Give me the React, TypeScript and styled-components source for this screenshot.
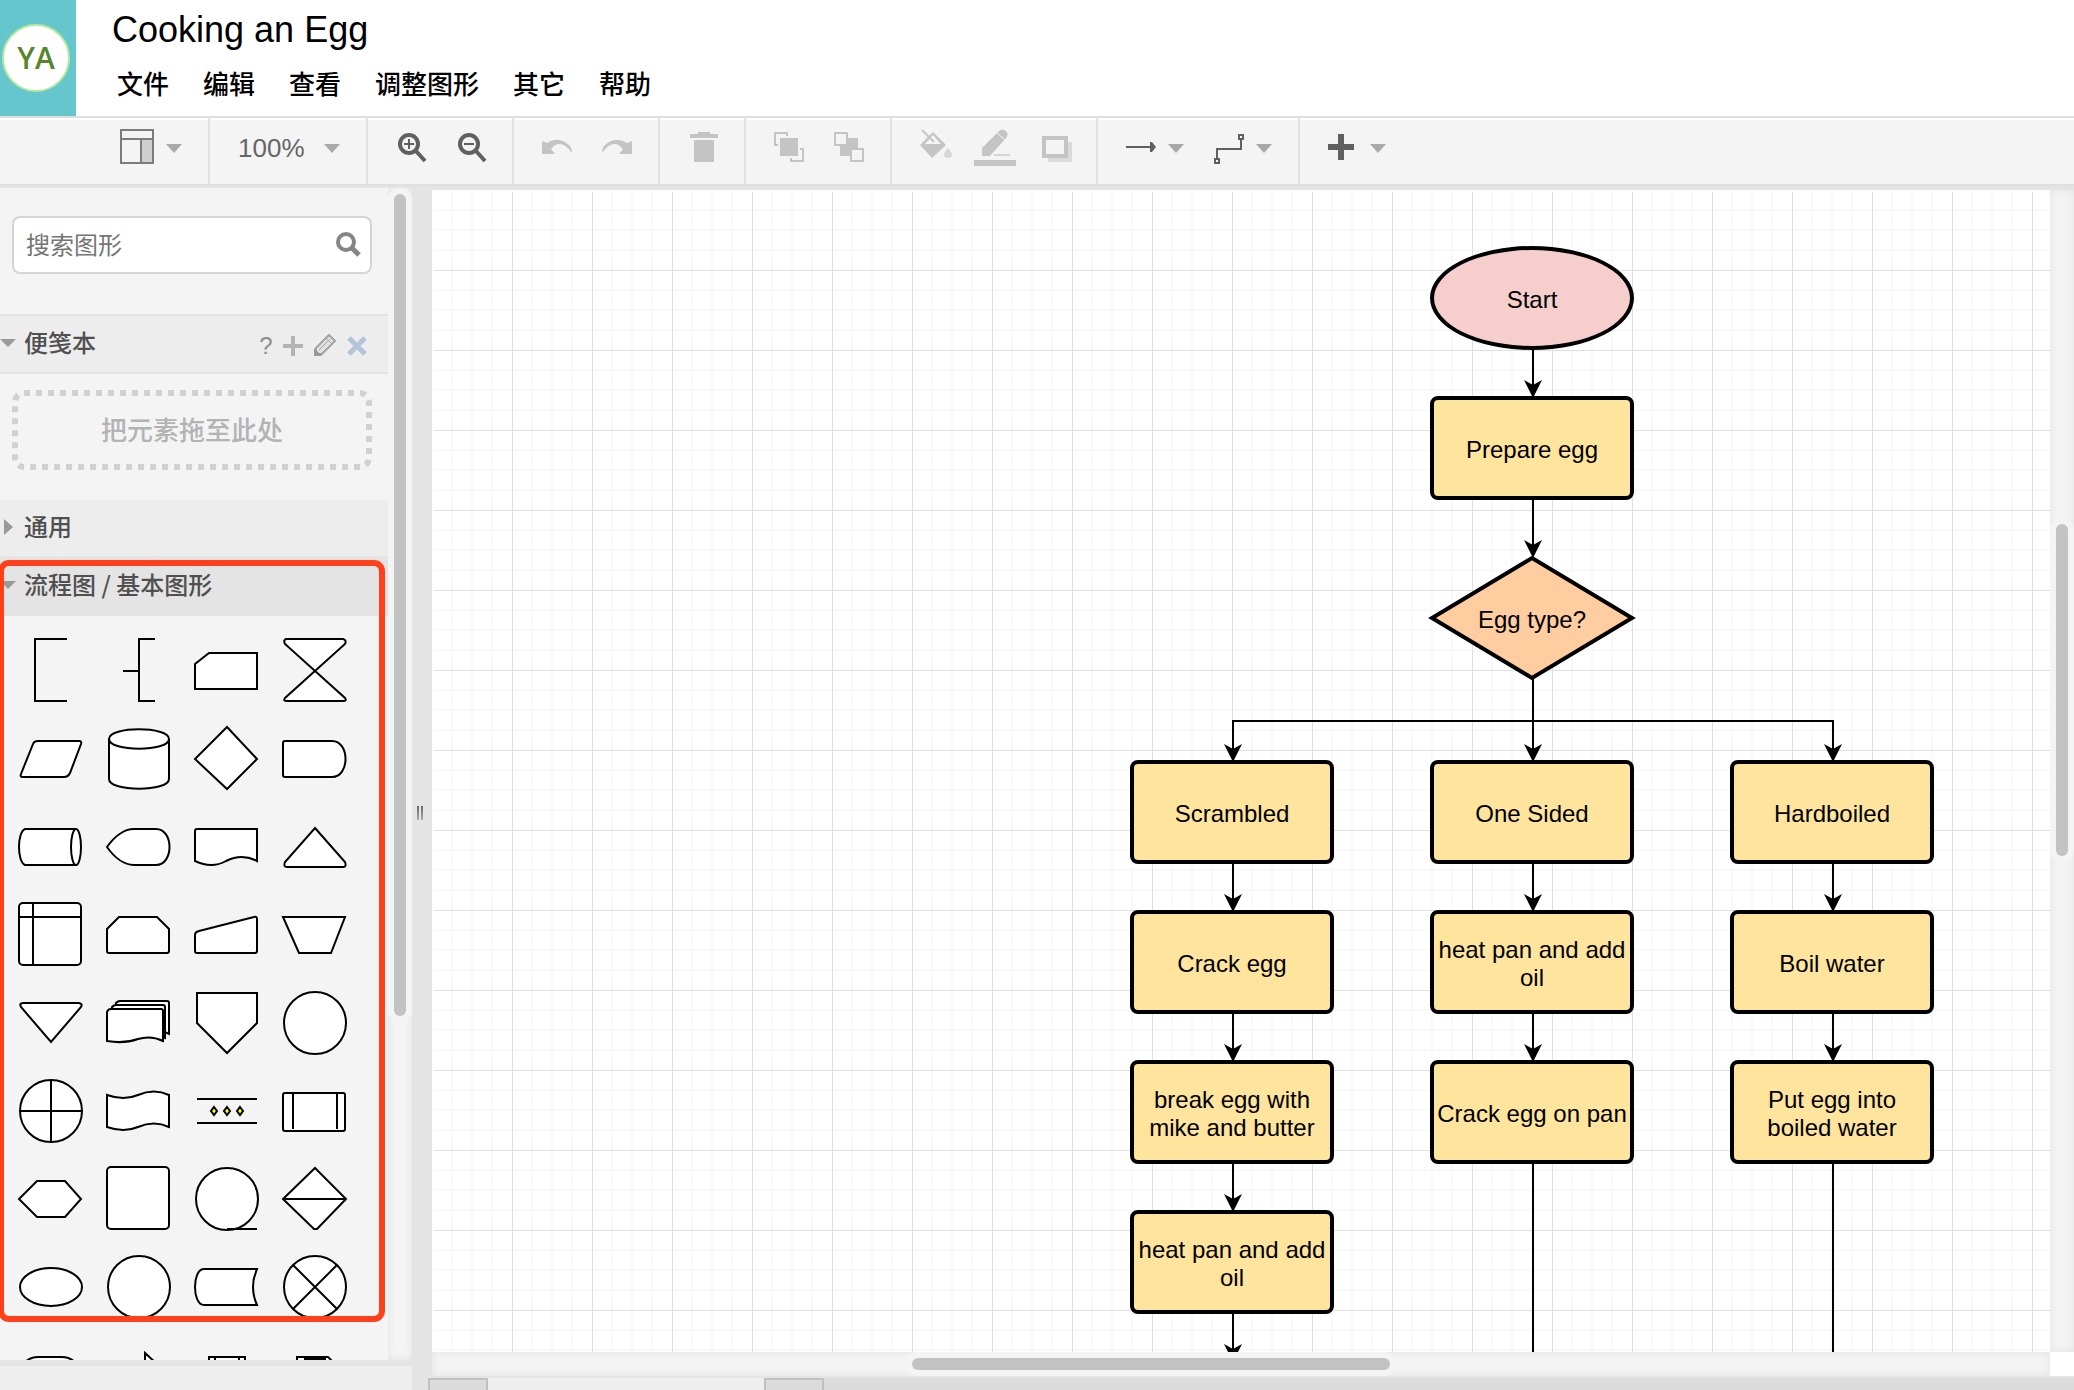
import React from "react";
import styled, { createGlobalStyle } from "styled-components";

const latin = `"Liberation Sans", Arial, "Noto Sans CJK SC", sans-serif`;
const han = `"Noto Sans CJK SC", "Liberation Sans", sans-serif`;

const GlobalStyle = createGlobalStyle`
  *, *::before, *::after { box-sizing: border-box; }
  body { margin: 0; overflow: hidden; font-family: ${latin}; background: #fff; }
  button { margin: 0; padding: 0; border: 0; background: none; font: inherit; color: inherit; cursor: pointer; }
  svg { display: block; overflow: visible; flex: none; }
`;

const Page = styled.div`
  display: flex;
  flex-direction: column;
  height: 100vh;
`;

/* ---------- header ---------- */

const Header = styled.header`
  display: flex;
  flex: none;
  height: 116px;
  background: #fff;
`;

const Brand = styled.div`
  display: flex;
  align-items: center;
  justify-content: center;
  width: 76px;
  padding-right: 4px;
  background: #66c6cd;
`;

const Avatar = styled.div`
  display: flex;
  align-items: center;
  justify-content: center;
  flex: none;
  width: 68px;
  height: 68px;
  border: 2px solid #b5ea9c;
  border-radius: 50%;
  background: #fff;
  color: #56862c;
  font: 600 30px/1 "Open Sans", sans-serif;
`;

const Heading = styled.div`
  display: flex;
  flex-direction: column;
  padding: 9px 0 0 36px;
`;

const Title = styled.h1`
  margin: 0;
  font-size: 36px;
  line-height: 42px;
  font-weight: 400;
  color: #000;
`;

const MenuBar = styled.nav`
  display: flex;
  gap: 34px;
  padding: 14px 0 0 5px;
`;

const MenuItem = styled.button`
  font-family: ${han};
  font-size: 26px;
  line-height: 36px;
  font-weight: 500;
  color: #000;
  white-space: nowrap;
`;

/* ---------- toolbar ---------- */

const Toolbar = styled.div`
  display: flex;
  flex: none;
  height: 70px;
  border-top: 2px solid #dfdfdf;
  border-bottom: 2px solid #dfdfdf;
  background: linear-gradient(#fff 2px, #f4f4f4 2px);
`;

const ToolGroup = styled.div<{ $indent?: number; $last?: boolean }>`
  display: flex;
  align-items: center;
  gap: 28px;
  padding: 0 24px 6px ${(p) => p.$indent ?? 28}px;
  border-right: ${(p) => (p.$last ? "0" : "2px solid #e2e2e2")};
`;

const Tool = styled.button<{ $dim?: boolean }>`
  display: flex;
  align-items: center;
  gap: 10px;
  color: ${(p) => (p.$dim ? "#c4c4c4" : "#606060")};
`;

const ZoomLabel = styled.span`
  width: 76px;
  font-size: 26px;
  line-height: 32px;
  color: #666;
  text-align: left;
`;

const Caret = () => (
  <svg width="18" height="32" viewBox="0 0 18 32">
    <path d="M0 12H16L8 21Z" fill="#a9a9a9" />
  </svg>
);

const Glyph = ({ children, size = 32 }: { children: React.ReactNode; size?: number }) => (
  <svg width={size} height={size} viewBox={`0 0 ${size} ${size}`} fill="none" stroke="currentColor">
    {children}
  </svg>
);

/* ---------- workspace ---------- */

const Workspace = styled.div`
  display: flex;
  flex: 1;
  min-height: 0;
  background: #e4e4e4;
`;

const SideColumn = styled.aside`
  display: flex;
  flex-direction: column;
  width: 412px;
  flex: none;
  padding-top: 2px;
`;

const SideScroll = styled.div`
  display: flex;
  flex: 1;
  min-height: 0;
`;

const SideContent = styled.div`
  flex: 1;
  min-width: 0;
  overflow: hidden;
  background: #f4f4f4;
`;

const SideFooter = styled.div`
  flex: none;
  height: 30px;
  border-top: 6px solid #e4e4e4;
  background: #eee;
`;

const Track = styled.div<{ $row?: boolean }>`
  display: flex;
  flex: ${(p) => (p.$row ? "1" : "none")};
  flex-direction: ${(p) => (p.$row ? "row" : "column")};
  ${(p) => (p.$row ? "height" : "width")}: 24px;
  padding: 6px;
  overflow: hidden;
  background: #f4f4f4;
  box-shadow: inset 0 0 8px #e2e2e2;
`;

const Thumb = styled.div<{ $share: number }>`
  flex: ${(p) => p.$share} 1 0;
  border-radius: 6px;
  background: #c3c3c3;
  box-shadow: 0 0 0 6px #f4f4f4;
`;

const Rest = styled.div<{ $share: number }>`
  flex: ${(p) => p.$share} 1 0;
`;

const Scrollbar = ({ row, before, size, after }: { row?: boolean; before: number; size: number; after: number }) => (
  <Track $row={row} aria-hidden="true">
    <Rest $share={before} />
    <Thumb $share={size} />
    <Rest $share={after} />
  </Track>
);

const SearchBox = styled.label`
  display: flex;
  align-items: center;
  height: 58px;
  margin: 28px 16px 40px 12px;
  padding: 0 10px 2px 12px;
  border: 2px solid #d5d5d5;
  border-radius: 8px;
  background: #fff;
`;

const SearchInput = styled.input`
  flex: 1;
  min-width: 0;
  padding: 0;
  border: 0;
  outline: 0;
  background: none;
  font: 400 24px/36px ${han};
  color: #333;
  &::placeholder { color: #757575; opacity: 1; }
`;

const Section = styled.section`
  position: relative;
`;

const SectionBar = styled.div<{ $tone?: "lined" | "active" }>`
  display: flex;
  align-items: center;
  height: ${(p) => (p.$tone ? 60 : 56)}px;
  padding-right: 21px;
  border: solid #e2e2e2;
  border-width: ${(p) => (p.$tone === "lined" ? "2px 0" : "0")};
  background: ${(p) => (p.$tone === "active" ? "#e4e4e4" : "#ededed")};
`;

const SectionToggle = styled.button`
  display: flex;
  align-items: center;
  gap: 8px;
  flex: 1;
  padding-bottom: 4px;
  font: 500 24px/36px ${han};
  color: #505050;
  text-align: left;
`;

const SectionTools = styled.div`
  display: flex;
  align-items: center;
  gap: 10px;
  padding-top: 4px;
`;

const HelpButton = styled.button`
  width: 14px;
  font-size: 24px;
  line-height: 24px;
  color: #8c8c8c;
`;

const DropZone = styled.div`
  position: relative;
  display: flex;
  align-items: center;
  justify-content: center;
  height: 80px;
  margin: 16px 16px 30px 12px;
  padding-bottom: 2px;
  font: 500 26px/36px ${han};
  color: #b3b3b3;
`;

const DropOutline = styled.svg`
  position: absolute;
  inset: 0;
  width: 100%;
  height: 100%;
  rect {
    x: 3px;
    y: 3px;
    width: calc(100% - 6px);
    height: calc(100% - 6px);
  }
`;

const Palette = styled.div`
  display: grid;
  grid-template-columns: repeat(4, 88px);
  padding: 10px 0 0 6px;
`;

const Highlight = styled.div`
  position: absolute;
  top: 4px;
  left: -2px;
  right: 3px;
  height: 762px;
  border: 6px solid #ff401a;
  border-radius: 11px;
  pointer-events: none;
`;

const Splitter = styled.div`
  display: flex;
  align-items: center;
  justify-content: center;
  gap: 2px;
  flex: none;
  width: 16px;
  padding-top: 50px;
`;

const Grip = styled.span`
  width: 2px;
  height: 14px;
  background: linear-gradient(#666, #aaa);
`;

const MainColumn = styled.main`
  display: flex;
  flex-direction: column;
  flex: 1;
  min-width: 0;
  padding-top: 4px;
`;

const CanvasRow = styled.div`
  display: flex;
  flex: 1;
  min-height: 0;
  padding-left: 4px;
`;

const ScrollRow = styled.div`
  display: flex;
  flex: none;
  padding-left: 4px;
`;

const Corner = styled.div`
  width: 24px;
  height: 24px;
  background: #fff;
`;

const minor = "#f9f9f9";
const stops = [19, 39, 59]
  .map((p) => `transparent ${p}px, ${minor} ${p}px, ${minor} ${p + 2}px, transparent ${p + 2}px`)
  .join(", ");

const Canvas = styled.div`
  position: relative;
  flex: 1;
  min-width: 0;
  overflow: hidden;
  border: solid #fff;
  border-width: 2px 0 0 2px;
  background-color: #fff;
  background-image:
    linear-gradient(90deg, #dfdfdf 1px, transparent 1px),
    linear-gradient(#dfdfdf 1px, transparent 1px),
    linear-gradient(90deg, ${stops}),
    linear-gradient(${stops});
  background-size: 80px 80px;
  background-position: -2px -2px;
`;

const Wires = styled.svg`
  position: absolute;
  top: -2px;
  left: -2px;
  width: 100%;
  height: 100%;
`;

const NodeBox = styled.div<{ $x: number; $y: number; $kind: Kind }>`
  position: absolute;
  left: ${(p) => p.$x}px;
  top: ${(p) => p.$y}px;
  display: flex;
  align-items: center;
  justify-content: center;
  width: 204px;
  height: ${(p) => (p.$kind === "choice" ? 124 : 104)}px;
  padding-top: 4px;
  border: solid #000;
  border-width: ${(p) => (p.$kind === "choice" ? 0 : 4)}px;
  border-radius: ${(p) => (p.$kind === "start" ? "50%" : "8px")};
  background: ${(p) => (p.$kind === "start" ? "#f6cecc" : p.$kind === "choice" ? "none" : "#ffe49e")};
  font-size: 24px;
  line-height: 28px;
  text-align: center;
  color: #000;
`;

const NodeText = styled.span`
  position: relative;
`;

const DiamondShape = styled.svg`
  position: absolute;
  inset: 0;
`;

const Tabs = styled.div`
  display: flex;
  flex: none;
  height: 14px;
  padding-top: 2px;
  background: linear-gradient(#e4e4e4 2px, #dbdbdb 2px);
`;

const Tab = styled.button<{ $active?: boolean }>`
  width: ${(p) => (p.$active ? 276 : 60)}px;
  border: solid #c0c0c0;
  border-width: ${(p) => (p.$active ? "0" : "2px 2px 0 2px")};
  background: ${(p) => (p.$active ? "#eee" : "#dbdbdb")};
`;

/* ---------- data ---------- */

type Kind = "start" | "step" | "choice";

const nodes: { x: number; y: number; kind: Kind; text: string }[] = [
  { x: 996, y: 54, kind: "start", text: "Start" },
  { x: 996, y: 204, kind: "step", text: "Prepare egg" },
  { x: 996, y: 364, kind: "choice", text: "Egg type?" },
  { x: 696, y: 568, kind: "step", text: "Scrambled" },
  { x: 996, y: 568, kind: "step", text: "One Sided" },
  { x: 1296, y: 568, kind: "step", text: "Hardboiled" },
  { x: 696, y: 718, kind: "step", text: "Crack egg" },
  { x: 996, y: 718, kind: "step", text: "heat pan and add oil" },
  { x: 1296, y: 718, kind: "step", text: "Boil water" },
  { x: 696, y: 868, kind: "step", text: "break egg with mike and butter" },
  { x: 996, y: 868, kind: "step", text: "Crack egg on pan" },
  { x: 1296, y: 868, kind: "step", text: "Put egg into boiled water" },
  { x: 696, y: 1018, kind: "step", text: "heat pan and add oil" },
];

const wires = [
  "M1101 158V200",
  "M1101 308V360",
  "M1101 486V564",
  "M1101 531H801V564",
  "M1101 531H1401V564",
  "M801 672V714",
  "M801 822V864",
  "M801 972V1014",
  "M801 1122V1164",
  "M1101 672V714",
  "M1101 822V864",
  "M1101 972V1300",
  "M1401 672V714",
  "M1401 822V864",
  "M1401 972V1300",
];

const heads = [
  [1101, 208], [1101, 368], [1101, 572], [801, 572], [1401, 572],
  [801, 722], [801, 872], [801, 1022], [801, 1172],
  [1101, 722], [1101, 872], [1401, 722], [1401, 872],
];

const p = (d: string, open = false) => <path d={d} fill={open ? "none" : "#fff"} />;

const shapes: { name: string; art: React.ReactNode }[] = [
  { name: "Annotation", art: p("M61 13H29V75H61", true) },
  { name: "Annotation with stem", art: p("M61 13H45V75H61M29 45H45", true) },
  { name: "Card", art: p("M27 27H75V63H13V38Z") },
  { name: "Collate", art: p("M16 13H73Q77 14 75 18L15 72Q13 75 16 75H74Q77 75 75 72L15 18Q13 14 16 13Z") },
  { name: "Data", art: p("M32 27H73Q76 27 75 30L64 59Q62 63 58 63H16Q14 63 15 60L27 30Q28 27 32 27Z") },
  { name: "Database", art: <>{p("M15 25C15 12 75 12 75 25V65C75 78 15 78 15 65Z")}{p("M15 25C15 38 75 38 75 25", true)}</> },
  { name: "Decision", art: p("M45 13L75 45L45 75L13 45Z") },
  { name: "Delay", art: p("M15 27H62C80 27 80 63 62 63H15Q13 63 13 61V29Q13 27 15 27Z") },
  { name: "Direct data", art: <>{p("M19 27H70V63H19C11 60 11 30 19 27Z")}<ellipse cx="70" cy="45" rx="5" ry="18" fill="#fff" /></> },
  { name: "Display", art: p("M13 45C20 35 30 27 40 27H62C80 27 80 63 62 63H40C30 63 20 55 13 45Z") },
  { name: "Document", art: p("M15 27H75V59Q60 51 44 59Q30 67 13 59V29Q13 27 15 27Z") },
  { name: "Extract", art: p("M45 26L75 60Q77 65 73 65H17Q13 65 15 60Z") },
  { name: "Internal storage", art: <><rect x="13" y="13" width="62" height="62" rx="4" fill="#fff" />{p("M27 13V75M13 27H75", true)}</> },
  { name: "Loop limit", art: p("M25 27H63L75 39V61Q75 63 73 63H15Q13 63 13 61V39Z") },
  { name: "Manual input", art: p("M13 45Q13 42 17 41L72 27Q75 26 75 29V61Q75 63 73 63H15Q13 63 13 61Z") },
  { name: "Manual operation", art: p("M13 27H75L61 63H29Z") },
  { name: "Merge", art: p("M17 25H73Q77 26 75 29L45 64L15 29Q13 25 17 25Z") },
  {
    name: "Multi-document",
    art: <>
      {p("M22 25Q24 23 26 23H73Q75 23 75 25V56L71 54L20 50Z")}
      {p("M18 29Q20 27 22 27H69Q71 27 71 29V60L66 58L16 54Z")}
      {p("M13 34Q14 31 17 31H67Q69 31 69 33V63Q57 57 44 61Q30 66 13 63Z")}
    </>,
  },
  { name: "Off-page reference", art: p("M15 15H75V45L45 75L15 45Z") },
  { name: "On-page reference", art: <circle cx="45" cy="45" r="31" fill="#fff" /> },
  { name: "Or", art: <><circle cx="45" cy="45" r="31" fill="#fff" />{p("M45 14V76M14 45H76", true)}</> },
  { name: "Paper tape", art: p("M13 29Q30 35 44 29Q60 22 75 29V61Q60 54 44 61Q30 67 13 61Z") },
  {
    name: "Parallel mode",
    art: <>{p("M15 33H75M15 57H75", true)}{[32, 45, 58].map((x) => <path key={x} d={`M${x} 41L${x + 3} 45L${x} 49L${x - 3} 45Z`} fill="#ffff00" />)}</>,
  },
  { name: "Predefined process", art: <><rect x="13" y="27" width="62" height="38" rx="2" fill="#fff" />{p("M23 27V63M67 27V63", true)}</> },
  { name: "Preparation", art: p("M31 27H59L75 45L59 63H31L13 45Z") },
  { name: "Process", art: <rect x="13" y="13" width="62" height="62" rx="4" fill="#fff" /> },
  { name: "Sequential data", art: <><circle cx="45" cy="45" r="31" fill="#fff" />{p("M45 75H75", true)}</> },
  { name: "Sort", art: <>{p("M45 14L76 45L47 75H44L13 45Z")}{p("M13 45H76", true)}</> },
  { name: "Start", art: <ellipse cx="45" cy="45" rx="31" ry="19" fill="#fff" /> },
  { name: "Start circle", art: <circle cx="45" cy="45" r="31" fill="#fff" /> },
  { name: "Stored data", art: p("M22 27H75Q67 45 75 63H22C10 63 10 27 22 27Z") },
  { name: "Summing function", art: <><circle cx="45" cy="45" r="31" fill="#fff" />{p("M23 23L67 67M67 23L23 67", true)}</> },
  { name: "Terminator", art: <rect x="13" y="27" width="62" height="38" rx="19" fill="#fff" /> },
  { name: "Transfer", art: p("M51 23L75 45L51 67V55H15V35H51Z") },
  { name: "Rack", art: <><rect x="27" y="27" width="36" height="38" fill="#fff" />{p("M33 27V65M57 27V65", true)}</> },
  { name: "Storage cell", art: <>{p("M27 27H58L62 31V65H27Z")}<path d="M35 28H55V34H35Z" fill="#000" /></> },
];

const menus = ["文件", "编辑", "查看", "调整图形", "其它", "帮助"];

const Marker = ({ open }: { open?: boolean }) => (
  <svg width="16" height="16" viewBox="0 0 16 16">
    <path d={open ? "M0 5H16L8 13Z" : "M4 1V17L13 9Z"} fill="#999" />
  </svg>
);

/* ---------- app ---------- */

export default function App() {
  return (
    <Page>
      <GlobalStyle />
      <Header>
        <Brand><Avatar>YA</Avatar></Brand>
        <Heading>
          <Title>Cooking an Egg</Title>
          <MenuBar>{menus.map((m) => <MenuItem key={m}>{m}</MenuItem>)}</MenuBar>
        </Heading>
      </Header>

      <Toolbar role="toolbar">
        <ToolGroup $indent={118}>
          <Tool aria-label="View">
            <Glyph size={38}>
              <path d="M23 10H35V34H23Z" fill="#cfcfcf" stroke="none" />
              <path d="M3 1H35V34H3ZM3 10H35M23 10V34" stroke="#7c7c7c" strokeWidth="2" />
            </Glyph>
            <Caret />
          </Tool>
        </ToolGroup>
        <ToolGroup>
          <Tool><ZoomLabel>100%</ZoomLabel><Caret /></Tool>
        </ToolGroup>
        <ToolGroup>
          <Tool aria-label="Zoom in">
            <Glyph>
              <circle cx="13" cy="12" r="9" strokeWidth="4" />
              <path d="M20 19L29 29" strokeWidth="4" />
              <path d="M8 12H18M13 7V17" strokeWidth="2" />
            </Glyph>
          </Tool>
          <Tool aria-label="Zoom out">
            <Glyph>
              <circle cx="13" cy="12" r="9" strokeWidth="4" />
              <path d="M20 19L29 29" strokeWidth="4" />
              <path d="M8 12H18" strokeWidth="2" />
            </Glyph>
          </Tool>
        </ToolGroup>
        <ToolGroup>
          <Tool $dim aria-label="Undo">
            <Glyph><path d="M0 9L5 11Q17 3 28 14Q30 17 30 20H29Q23 11 16 12Q12 13 9 17L13 22H0Z" fill="currentColor" stroke="none" /></Glyph>
          </Tool>
          <Tool $dim aria-label="Redo">
            <Glyph><path d="M30 9L25 11Q13 3 2 14Q0 17 0 20H1Q7 11 14 12Q18 13 21 17L17 22H30Z" fill="currentColor" stroke="none" /></Glyph>
          </Tool>
        </ToolGroup>
        <ToolGroup>
          <Tool $dim aria-label="Delete">
            <Glyph><path d="M2 2H10V0H22V2H30V6H2ZM6 8H26V30H6Z" fill="currentColor" stroke="none" /></Glyph>
          </Tool>
        </ToolGroup>
        <ToolGroup>
          <Tool $dim aria-label="To front">
            <Glyph>
              <path d="M6 6H24V24H6Z" fill="currentColor" stroke="none" />
              <path d="M4 13H1V1H13V4M26 17H29V29H17V26" strokeWidth="2" />
            </Glyph>
          </Tool>
          <Tool $dim aria-label="To back">
            <Glyph>
              <path d="M6 6H24V24H6Z" fill="currentColor" stroke="none" />
              <path d="M1 1H13V13H1ZM17 17H29V29H17Z" fill="#f4f4f4" strokeWidth="2" />
            </Glyph>
          </Tool>
        </ToolGroup>
        <ToolGroup>
          <Tool $dim aria-label="Fill color">
            <Glyph>
              <path d="M13 0L26 13L12 26L0 13Z" fill="currentColor" stroke="none" />
              <path d="M13 3L21 12H5Z" fill="#f4f4f4" stroke="none" />
              <path d="M2 -2L14 10" strokeWidth="2" />
              <path d="M28 16Q36 25 28 26Q20 25 28 16Z" fill="#d6d6d6" stroke="none" />
            </Glyph>
          </Tool>
          <Tool $dim aria-label="Line color">
            <Glyph>
              <path d="M2 24V16L19 -1Q22 -4 26 -1Q29 3 26 6L10 24Z" fill="currentColor" stroke="none" />
              <path d="M17 1L25 8" stroke="#f4f4f4" />
              <path d="M14 23H30" stroke="#d6d6d6" strokeWidth="2" />
              <path d="M-6 31H36" strokeWidth="6" />
            </Glyph>
          </Tool>
          <Tool $dim aria-label="Shadow">
            <Glyph>
              <path d="M8 10H32V30H8Z" fill="#dadada" stroke="none" />
              <path d="M4 6H26V24H4Z" fill="#f4f4f4" strokeWidth="4" />
            </Glyph>
          </Tool>
        </ToolGroup>
        <ToolGroup>
          <Tool aria-label="Connection">
            <Glyph><path d="M0 15H26" strokeWidth="2" /><path d="M24 10H26L30 15L26 20H24Z" fill="currentColor" stroke="none" /></Glyph>
            <Caret />
          </Tool>
          <Tool aria-label="Waypoints">
            <Glyph><path d="M3 27V17H27V7M25 3H29V7H25ZM1 27H5V31H1Z" strokeWidth="2" /></Glyph>
            <Caret />
          </Tool>
        </ToolGroup>
        <ToolGroup $last>
          <Tool aria-label="Insert">
            <Glyph><path d="M0 15H26M13 2V28" strokeWidth="6" /></Glyph>
            <Caret />
          </Tool>
        </ToolGroup>
      </Toolbar>

      <Workspace>
        <SideColumn>
          <SideScroll>
            <SideContent>
              <SearchBox>
                <SearchInput type="text" placeholder="搜索图形" aria-label="搜索图形" />
                <svg width="24" height="24" viewBox="0 0 24 24" fill="none" stroke="#858585">
                  <circle cx="10" cy="10" r="8" strokeWidth="4" />
                  <path d="M16 16L23 23" strokeWidth="5" />
                </svg>
              </SearchBox>

              <Section>
                <SectionBar $tone="lined">
                  <SectionToggle><Marker open />便笺本</SectionToggle>
                  <SectionTools>
                    <HelpButton aria-label="Help">?</HelpButton>
                    <button aria-label="Add">
                      <svg width="20" height="20" viewBox="0 0 20 20"><path d="M0 10H20M10 0V20" stroke="#b3b3b3" strokeWidth="4" /></svg>
                    </button>
                    <button aria-label="Edit">
                      <svg width="24" height="24" viewBox="0 0 24 24" fill="none" stroke="#a3a3a3" strokeWidth="2">
                        <path d="M3 14L16 1L22 7L9 20L3 20Z" fill="#e2e2e2" />
                        <path d="M6 16L17 5M13 4L19 10" strokeWidth="1" />
                        <path d="M1 14L9 22H1Z" fill="#999" stroke="none" />
                      </svg>
                    </button>
                    <button aria-label="Close">
                      <svg width="20" height="20" viewBox="0 0 20 20"><path d="M2 2L18 18M18 2L2 18" stroke="#b2c5d8" strokeWidth="5" /></svg>
                    </button>
                  </SectionTools>
                </SectionBar>
                <DropZone>
                  <DropOutline>
                    <rect rx="9" fill="none" stroke="#d1d1d1" strokeWidth="6" strokeDasharray="6 6" />
                  </DropOutline>
                  把元素拖至此处
                </DropZone>
              </Section>

              <Section>
                <SectionBar><SectionToggle><Marker />通用</SectionToggle></SectionBar>
              </Section>

              <Section>
                <SectionBar $tone="active"><SectionToggle><Marker open />流程图 / 基本图形</SectionToggle></SectionBar>
                <Palette>
                  {shapes.map((s) => (
                    <button key={s.name} aria-label={s.name}>
                      <svg width="88" height="88" viewBox="0 0 88 88" stroke="#000" strokeWidth="2">{s.art}</svg>
                    </button>
                  ))}
                </Palette>
                <Highlight />
              </Section>
            </SideContent>
            <Scrollbar before={0} size={822} after={338} />
          </SideScroll>
          <SideFooter />
        </SideColumn>

        <Splitter><Grip /><Grip /></Splitter>

        <MainColumn>
          <CanvasRow>
            <Canvas>
              <Wires>
                {wires.map((d) => <path key={d} d={d} fill="none" stroke="#000" strokeWidth="2" />)}
                {heads.map(([x, y]) => (
                  <path key={`${x}-${y}`} d={`M${x} ${y}L${x - 9} ${y - 18}L${x} ${y - 13}L${x + 9} ${y - 18}Z`} fill="#000" />
                ))}
              </Wires>
              {nodes.map((n) => (
                <NodeBox key={`${n.x}-${n.y}`} $x={n.x} $y={n.y} $kind={n.kind}>
                  {n.kind === "choice" && (
                    <DiamondShape width="204" height="124" viewBox="0 0 204 124">
                      <path d="M102 2L202 62L102 122L2 62Z" fill="#ffcd9f" stroke="#000" strokeWidth="4" />
                    </DiamondShape>
                  )}
                  <NodeText>{n.text}</NodeText>
                </NodeBox>
              ))}
            </Canvas>
            <Scrollbar before={328} size={332} after={490} />
          </CanvasRow>
          <ScrollRow>
            <Scrollbar row before={474} size={478} after={654} />
            <Corner />
          </ScrollRow>
          <Tabs>
            <Tab aria-label="Pages" />
            <Tab $active aria-label="Page 1" />
            <Tab aria-label="Add page" />
          </Tabs>
        </MainColumn>
      </Workspace>
    </Page>
  );
}
